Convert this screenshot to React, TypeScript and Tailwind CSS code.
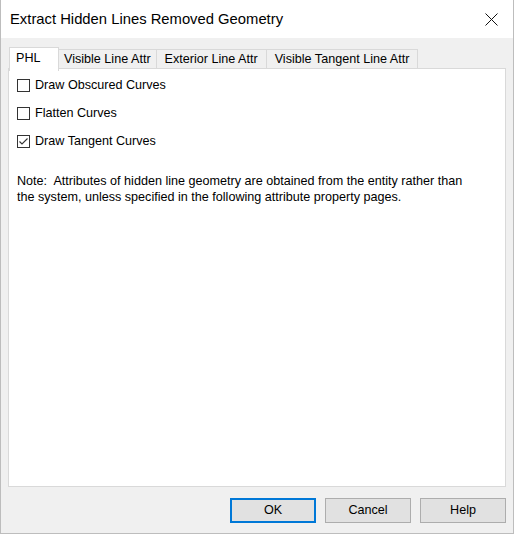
import React from "react";

const font = { fontFamily: '"Liberation Sans", Arial, sans-serif' };

function Check({ label, checked }: { label: string; checked?: boolean }) {
  return (
    <div className="flex items-center h-[28px]">
      <span className="w-[13px] h-[13px] border border-[#333333] bg-white flex items-center justify-center">
        {checked && (
          <svg width="11" height="11" viewBox="0 0 11 11">
            <polyline points="1.5,5.5 4,8 9.5,2.5" fill="none" stroke="#333333" strokeWidth="1.1" />
          </svg>
        )}
      </span>
      <span className="ml-[5px] text-[12.6px] text-black">{label}</span>
    </div>
  );
}

export default function App() {
  const tabs = ["Visible Line Attr", "Exterior Line Attr", "Visible Tangent Line Attr"];
  return (
    <div
      className="w-[514px] h-[534px] bg-[#f0f0f0] border border-t-0 border-[#bdbdbd] flex flex-col"
      style={font}
    >
      {/* title bar */}
      <div className="h-[38px] bg-white flex items-center justify-between pl-[9px] pr-[15px]">
        <span className="text-[14.8px] text-black">Extract Hidden Lines Removed Geometry</span>
        <svg width="13" height="13" viewBox="0 0 13 13">
          <path d="M0.5 0.5 L12.5 12.5 M12.5 0.5 L0.5 12.5" stroke="#111" strokeWidth="1" />
        </svg>
      </div>

      <div className="flex-1 flex flex-col px-[7px] pt-[9px]">
        {/* tabs */}
        <div className="flex items-end h-[22px] relative z-10">
          <div className="h-[24px] -mb-[2px] ml-[1px] w-[50px] bg-white border border-b-0 border-[#d9d9d9] flex items-center pl-[6px] pb-[3px] text-[12.6px] text-black">
            PHL
          </div>
          {tabs.map((t, i) => (
            <div
              key={t}
              className={`h-[20px] bg-[#f0f0f0] border border-l-0 border-[#d9d9d9] flex items-center text-[12.6px] text-black ${
                i === 0 ? "px-[5px]" : "px-[8px]"
              }`}
            >
              {t}
            </div>
          ))}
        </div>

        {/* panel */}
        <div className="h-[419px] -mt-[1px] bg-white border border-[#d9d9d9] pl-[8px] pt-[2px]">
          <Check label="Draw Obscured Curves" />
          <Check label="Flatten Curves" />
          <Check label="Draw Tangent Curves" checked />
          <p className="mt-[18px] w-[455px] text-[12.6px] leading-[16px] text-black">
            Note:&nbsp; Attributes of hidden line geometry are obtained from the entity rather than the system, unless specified in the following attribute property pages.
          </p>
        </div>

        {/* buttons */}
        <div className="flex justify-end gap-[9px] mt-[11px]">
          <button className="w-[86px] h-[25px] bg-[#e1e1e1] border-2 border-[#0078d7] text-[12.6px] text-black">
            OK
          </button>
          <button className="w-[86px] h-[25px] bg-[#e1e1e1] border border-[#adadad] text-[12.6px] text-black">
            Cancel
          </button>
          <button className="w-[86px] h-[25px] bg-[#e1e1e1] border border-[#adadad] text-[12.6px] text-black">
            Help
          </button>
        </div>
      </div>
    </div>
  );
}
